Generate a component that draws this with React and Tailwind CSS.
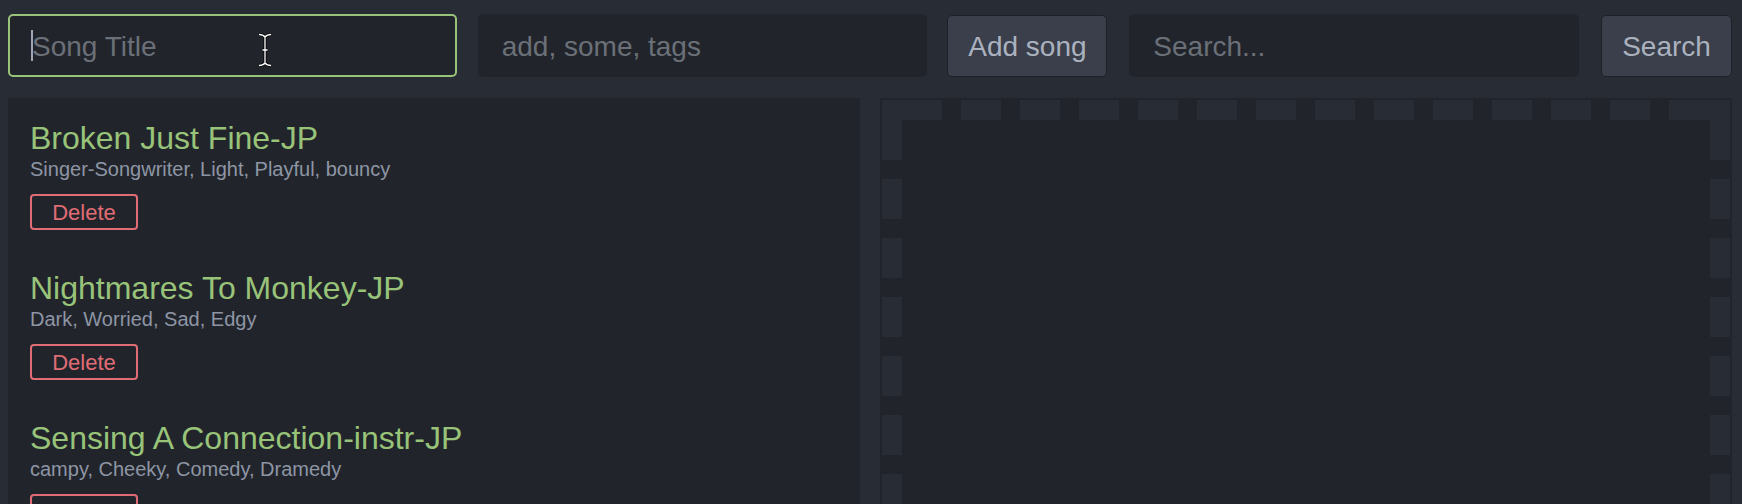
const songs = [
  { title: 'Broken Just Fine-JP', tags: 'Singer-Songwriter, Light, Playful, bouncy' },
  { title: 'Nightmares To Monkey-JP', tags: 'Dark, Worried, Sad, Edgy' },
  { title: 'Sensing A Connection-instr-JP', tags: 'campy, Cheeky, Comedy, Dramedy' },
];

export default function App() {
  return (
    <div className="h-[504px] overflow-hidden bg-[#282c34] pl-[8px] pr-[10px] pt-[14px] font-['Liberation_Sans',Arial,sans-serif]">
      <div className="flex h-[63px] items-center">
        <div className="relative h-[63px] w-[449px]">
          <input
            className="h-full w-full rounded-[5px] border-2 border-[#98c379] bg-[#21252b] px-[22px] pt-[2px] text-[28px] text-[#abb2bf] outline-none placeholder:text-[#6b7078]"
            placeholder="Song Title"
          />
          <span className="absolute left-[23px] top-[16px] h-[31px] w-[2px] bg-[#a0a7b4]" />
          <IBeam />
        </div>
        <input
          className="ml-[21px] h-[63px] w-[450px] rounded-[5px] border-2 border-transparent bg-[#21252b] px-[22px] pt-[2px] text-[28px] text-[#abb2bf] outline-none placeholder:text-[#6b7078]"
          placeholder="add, some, tags"
        />
        <Button className="ml-[20px] w-[160px]">Add song</Button>
        <input
          className="ml-[22px] h-[63px] w-[450px] rounded-[5px] border-2 border-transparent bg-[#21252b] px-[22px] pt-[2px] text-[28px] text-[#abb2bf] outline-none placeholder:text-[#6b7078]"
          placeholder="Search..."
        />
        <Button className="ml-[22px] w-[131px]">Search</Button>
      </div>

      <div className="mt-[21px] grid grid-cols-2 gap-[20px]">
        <section className="h-[460px] bg-[#21252b] px-[22px] pt-[20px]">
          {songs.map((song) => (
            <div key={song.title} className="mb-[38px]">
              <h2 className="text-[32px] leading-[40px] text-[#98c379]">{song.title}</h2>
              <p className="text-[20px] leading-[23px] text-[#8e95a5]">{song.tags}</p>
              <button className="mt-[13px] h-[36px] w-[108px] rounded-[4px] border-2 border-[#e06c75] text-[22px] text-[#e06c75]">
                Delete
              </button>
            </div>
          ))}
        </section>

        {/* drop zone: 20px dashes, 40 long with 19px gaps, solid 60px corners */}
        <section className="h-[460px] bg-[#21252b] p-[2px]">
          <div className="h-full bg-no-repeat bg-[image:repeating-linear-gradient(to_right,transparent_0_19px,#282c34_19px_59px),repeating-linear-gradient(to_bottom,transparent_0_19px,#282c34_19px_59px),repeating-linear-gradient(to_bottom,transparent_0_19px,#282c34_19px_59px),linear-gradient(#282c34,#282c34),linear-gradient(#282c34,#282c34),linear-gradient(#282c34,#282c34),linear-gradient(#282c34,#282c34)] bg-[position:1px_0,0_1px,100%_1px,0_0,0_0,100%_0,100%_0] bg-[size:100%_20px,20px_100%,20px_100%,60px_20px,20px_60px,61px_20px,20px_60px]" />
        </section>
      </div>
    </div>
  );
}

function Button({ className, children }) {
  return (
    <button
      className={`h-[62px] rounded-[5px] border border-[#1d2026] bg-[#3a3f4b] pt-[2px] text-[28px] text-[#abb2bf] ${className}`}
    >
      {children}
    </button>
  );
}

function IBeam() {
  return (
    <svg className="absolute left-[250px] top-[19px]" width="14" height="34" viewBox="0 0 14 34">
      <path
        d="M1 1.5 Q5 1.5 7 4 Q9 1.5 13 1.5 M7 4 V30 M1 32.5 Q5 32.5 7 30 Q9 32.5 13 32.5 M4.5 17 H9.5"
        fill="none"
        stroke="#000"
        strokeWidth="3"
      />
      <path
        d="M1 1.5 Q5 1.5 7 4 Q9 1.5 13 1.5 M7 4 V30 M1 32.5 Q5 32.5 7 30 Q9 32.5 13 32.5 M4.5 17 H9.5"
        fill="none"
        stroke="#fff"
        strokeWidth="1.3"
      />
    </svg>
  );
}
